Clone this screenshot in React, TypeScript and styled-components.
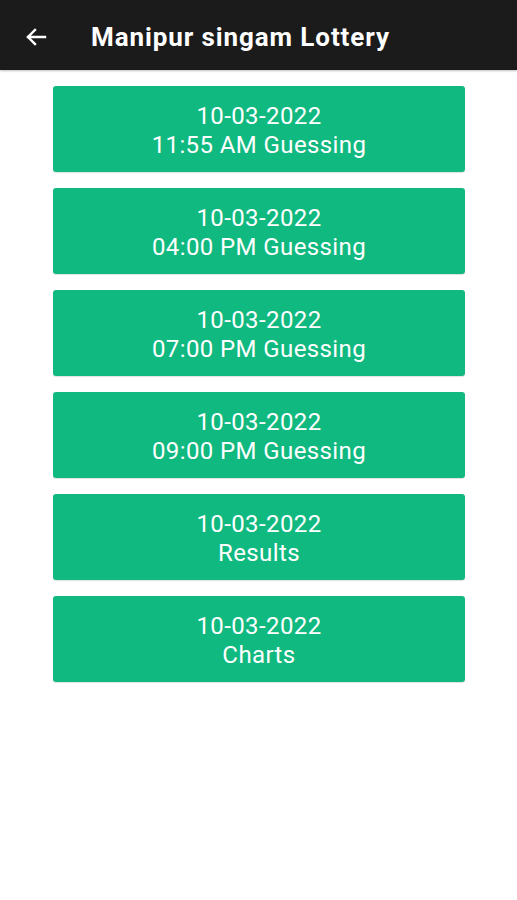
import React from 'react';
import styled, { createGlobalStyle } from 'styled-components';

const GlobalStyle = createGlobalStyle`
  html, body {
    margin: 0;
    padding: 0;
    background: #ffffff;
    font-family: Roboto, 'Liberation Sans', sans-serif;
  }
`;

const Page = styled.div`
  width: 517px;
  min-height: 900px;
  background: #ffffff;
`;

const Toolbar = styled.header`
  height: 70px;
  background: #1b1b1b;
  display: flex;
  align-items: center;
  padding: 3px 0 0 24px;
  box-sizing: border-box;
  box-shadow: 0 1px 2px rgba(0, 0, 0, 0.25);
`;

const BackButton = styled.button`
  width: 24px;
  height: 24px;
  padding: 0;
  border: none;
  background: none;
  color: #ffffff;
  display: flex;
  align-items: center;
  justify-content: center;
  margin-right: 43px;
`;

const Title = styled.h1`
  margin: 0;
  color: #ffffff;
  font-size: 26px;
  font-weight: 700;
  letter-spacing: 0.9px;
`;

const List = styled.div`
  display: flex;
  flex-direction: column;
  gap: 16px;
  padding: 16px 52px 0 53px;
`;

const Card = styled.button`
  height: 86px;
  border: none;
  border-radius: 3px;
  background: #10b97f;
  color: #ffffff;
  font-family: Roboto, 'Liberation Sans', sans-serif;
  font-size: 24px;
  letter-spacing: 0.4px;
  line-height: 29px;
  display: flex;
  flex-direction: column;
  align-items: center;
  justify-content: center;
  padding: 3px 0 0;
  box-shadow: 0 1px 1px rgba(0, 0, 0, 0.12);
`;

const items = [
  '11:55 AM Guessing',
  '04:00 PM Guessing',
  '07:00 PM Guessing',
  '09:00 PM Guessing',
  'Results',
  'Charts',
];

export default function App() {
  return (
    <Page>
      <GlobalStyle />
      <Toolbar>
        <BackButton aria-label="back">
          <svg width="24" height="24" viewBox="0 0 24 24" fill="none">
            <path
              d="M21 12H4M11 5l-7 7 7 7"
              stroke="#ffffff"
              strokeWidth="2.4"
              strokeLinecap="square"
            />
          </svg>
        </BackButton>
        <Title>Manipur singam Lottery</Title>
      </Toolbar>
      <List>
        {items.map((label) => (
          <Card key={label}>
            <span>10-03-2022</span>
            <span>{label}</span>
          </Card>
        ))}
      </List>
    </Page>
  );
}
